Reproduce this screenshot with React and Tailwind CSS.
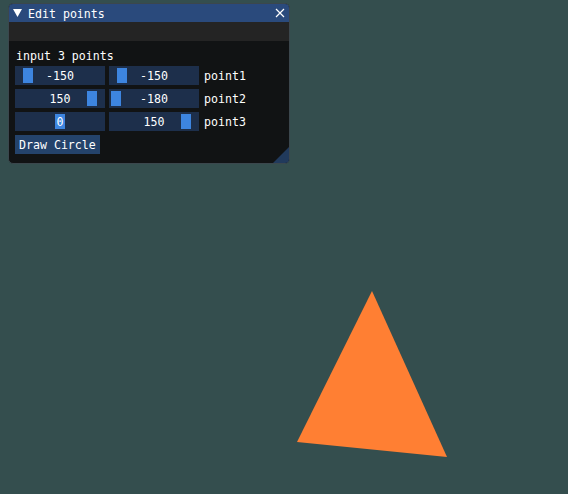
import React from "react";

function Slider({ value, grab }) {
  return (
    <div className="relative w-[90px] h-[19px] bg-[#1d2f4b] flex items-center justify-center">
      <div className="absolute top-[2px] w-[10px] h-[15px] bg-[#3d85e0]" style={{ left: grab }} />
      <span className="relative top-[1px] text-white">{value}</span>
    </div>
  );
}

function Row({ a, b, label }) {
  return (
    <div className="flex items-center gap-[4px] h-[19px]">
      <Slider value={a[0]} grab={a[1]} />
      <Slider value={b[0]} grab={b[1]} />
      <span className="relative top-[1px] text-white ml-[1px]">{label}</span>
    </div>
  );
}

export default function App() {
  return (
    <div
      className="relative w-[568px] h-[494px] bg-[#344e4e] overflow-hidden pt-[3px] pl-[8px] text-[11.6px] leading-[13px]"
      style={{ fontFamily: '"DejaVu Sans Mono", "Liberation Mono", monospace' }}
    >
      <svg className="absolute left-0 top-0" width="568" height="494">
        <polygon points="372,291 297,442 447,457" fill="#ff7f33" />
      </svg>
      <div className="relative w-[282px] h-[161px] rounded-[5px] overflow-hidden border border-[#3b474d] bg-[#111314] flex flex-col">
        <div className="h-[18px] bg-[#2a4a7c] flex items-center text-white">
          <svg width="9" height="8" className="ml-[4px]" viewBox="0 0 9 8">
            <polygon points="0,0 9,0 4.5,8" fill="#ffffff" />
          </svg>
          <span className="ml-[6px] relative top-[1px]">Edit points</span>
          <svg width="10" height="10" className="ml-auto mr-[4px]" viewBox="0 0 10 10">
            <path d="M1 1 L9 9 M9 1 L1 9" stroke="#ffffff" strokeWidth="1.2" />
          </svg>
        </div>
        <div className="h-[19px] bg-[#242424]" />
        <div className="flex flex-col gap-[4px] pl-[6px] pt-[8px]">
          <div className="text-white ml-[1px] h-[13px] relative top-[1px]">input 3 points</div>
          <Row a={["-150", 8]} b={["-150", 8]} label="point1" />
          <Row a={["150", 72]} b={["-180", 2]} label="point2" />
          <Row a={["0", 40]} b={["150", 72]} label="point3" />
          <div className="w-[85px] h-[19px] bg-[#24436b] flex items-center pl-[4px] text-white">
            <span className="relative top-[1px]">Draw Circle</span>
          </div>
        </div>
        <svg className="absolute right-0 bottom-0" width="16" height="16" viewBox="0 0 16 16">
          <polygon points="16,0 16,16 0,16" fill="#213a5c" />
        </svg>
      </div>
    </div>
  );
}
